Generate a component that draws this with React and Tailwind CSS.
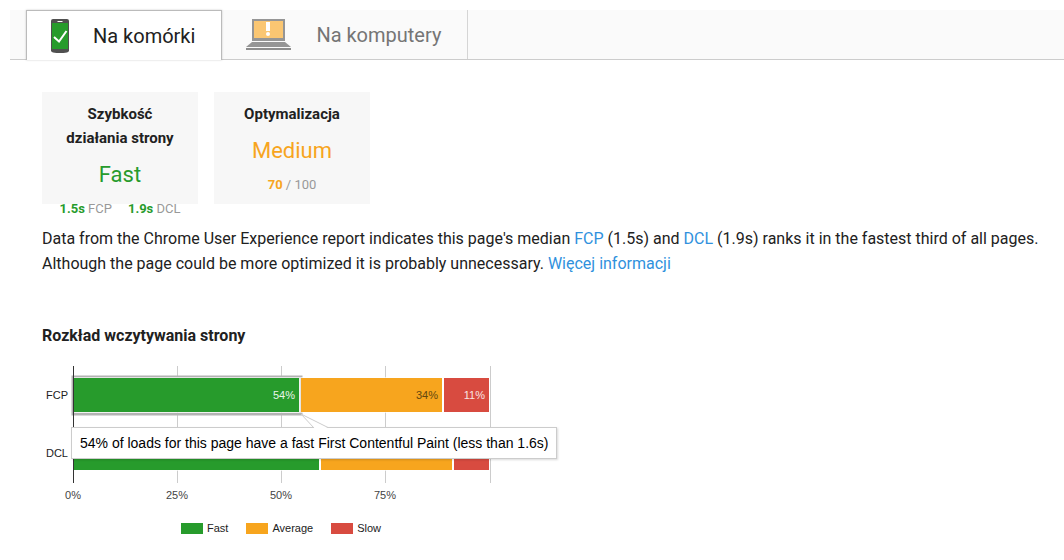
import { useState } from 'react'
import clsx from 'clsx'

const GREEN = '#279b2c'
const ORANGE = '#f7a51e'
const RED = '#d84b40'

const ticks = [
  { x: 31, label: '0%' },
  { x: 135, label: '25%' },
  { x: 239, label: '50%' },
  { x: 343, label: '75%' },
  { x: 448, label: '' },
]

const rows = [
  {
    name: 'FCP',
    y: 18,
    segments: [
      { x: 32, width: 225, fill: GREEN, label: '54%', color: '#e9f5ea' },
      { x: 259, width: 141, fill: ORANGE, label: '34%', color: '#63480f' },
      { x: 402, width: 45, fill: RED, label: '11%', color: '#f9e4e2' },
    ],
  },
  {
    name: 'DCL',
    y: 76,
    segments: [
      { x: 32, width: 245, fill: GREEN },
      { x: 279, width: 131, fill: ORANGE },
      { x: 412, width: 35, fill: RED },
    ],
  },
]

const legend = [
  { label: 'Fast', className: 'bg-[#279b2c]' },
  { label: 'Average', className: 'bg-[#f7a51e]' },
  { label: 'Slow', className: 'bg-[#d84b40]' },
]

function PhoneIcon() {
  return (
    <svg width="18" height="34" viewBox="0 0 18 34" aria-hidden="true">
      <path d="M2 0h14q2 0 2 2v29.500q0 1.500-2 2q-7 1-14 0q-2-.5-2-2V2q0-2 2-2z" fill="#505050" />
      <path d="M1 4h16v26H1z" fill="#279b2c" />
      <path d="M6.500 2.500h5" stroke="#fff" />
      <path d="M3 18l5 4.500L15.500 12" fill="none" stroke="#fff" strokeWidth="2" />
    </svg>
  )
}

function LaptopIcon() {
  return (
    <svg width="46" height="32" viewBox="0 0 46 32" aria-hidden="true">
      <path d="M6 0h33v22H6z" fill="#959595" />
      <path d="M8 2h29v17H8z" fill="#fac672" />
      <path d="M20 3h4v9h-4z" fill="#fff" />
      <circle cx="22" cy="15" r="2" fill="#fff" />
      <path d="M6 23h33l6 5H0z" fill="#959595" />
      <path d="M0 29h45v2H0z" fill="#8c8c8c" />
    </svg>
  )
}

function Tabs() {
  const [active, setActive] = useState('mobile')
  const tabs = [
    { id: 'mobile', label: 'Na komórki', icon: <PhoneIcon /> },
    { id: 'desktop', label: 'Na komputery', icon: <LaptopIcon /> },
  ]

  return (
    <div role="tablist" className="ml-2.5 mt-2.5 flex h-[50px] border-b border-[#ccc] bg-[#fafafa] pl-4">
      {tabs.map((tab) => (
        <button
          key={tab.id}
          type="button"
          role="tab"
          aria-selected={active === tab.id}
          onClick={() => setActive(tab.id)}
          className={clsx(
            'flex items-center gap-6 pl-6 pr-[26px] text-xl',
            active === tab.id
              ? '-mb-px border border-b-0 border-[#bbb] bg-white text-[#212121] shadow-[0_0_2px_rgba(0,0,0,0.2)]'
              : 'border-r border-[#d5d5d5] text-[#757575]'
          )}
        >
          {tab.icon}
          {tab.label}
        </button>
      ))}
    </div>
  )
}

function Card({ title, rating, ratingClass, children }) {
  return (
    <section className="h-28 w-[156px] bg-[#f7f7f7] px-4 pt-2.5 text-center">
      <h2 className="text-[15px] font-bold leading-6">{title}</h2>
      <div className={clsx('text-[22px] leading-[49px]', ratingClass)}>{rating}</div>
      <div className="flex justify-center gap-4 whitespace-nowrap text-[13px] leading-5 text-[#999]">{children}</div>
    </section>
  )
}

function LoadChart() {
  return (
    <div className="relative mt-3 w-[520px] font-['Liberation_Sans',Arial,sans-serif]">
      <svg width="460" height="146" viewBox="0 0 460 146" fontSize="11" className="block">
        {ticks.map((t, i) => (
          <g key={t.x}>
            <path d={`M${t.x + 0.5} 6V123`} stroke={i === 0 ? '#333' : '#ccc'} />
            {t.label && <text x={t.x} y="139" textAnchor="middle" fill="#444">{t.label}</text>}
          </g>
        ))}
        <rect x="31" y="17" width="228" height="37" fill="none" stroke="#b3b3b3" strokeWidth="3" />
        {rows.map((row) => (
          <g key={row.name}>
            <text x="26" y={row.y + 21} textAnchor="end" fill="#222">{row.name}</text>
            {row.segments.map((s) => (
              <g key={s.x}>
                <rect x={s.x} y={row.y} width={s.width} height="34" fill={s.fill} />
                <rect x={s.x - 0.5} y={row.y - 0.5} width={s.width + 1} height="35" fill="none" stroke="#fff" strokeOpacity="0.65" />
                {s.label && (
                  <text x={s.x + s.width - 4} y={row.y + 21} textAnchor="end" fill={s.color}>{s.label}</text>
                )}
              </g>
            ))}
          </g>
        ))}
        <path d="M31.500 6V123" stroke="#333" />
      </svg>

      <div role="tooltip" className="absolute left-[29px] top-[67px] border border-[#ccc] bg-white px-2 text-sm leading-[30px] whitespace-nowrap text-black shadow-[1px_1px_2px_rgba(0,0,0,0.15)]">
        54% of loads for this page have a fast First Contentful Paint (less than 1.6s)
        <svg width="30" height="15" viewBox="0 0 30 15" className="absolute -top-[15px] left-[228px]" aria-hidden="true">
          <path d="M1 1L14 15H28z" fill="#fff" />
          <path d="M14 15L1 1L28 14.500" fill="none" stroke="#ccc" />
        </svg>
      </div>

      <ul className="ml-[139px] mt-4 flex gap-[18px] text-[11px] leading-3 text-[#222]">
        {legend.map((item) => (
          <li key={item.label} className="flex items-center gap-1">
            <span className={clsx('h-[11px] w-[22px]', item.className)} />
            {item.label}
          </li>
        ))}
      </ul>
    </div>
  )
}

export default function App() {
  return (
    <div className="flow-root bg-white font-['Roboto',sans-serif] text-[#212121]">
      <Tabs />
      <main className="pb-6 pl-[42px] pr-4 pt-8">
        <div className="flex gap-4">
          <Card title="Szybkość działania strony" rating="Fast" ratingClass="text-[#279b2c]">
            <span><b className="text-[#279b2c]">1.5s</b> FCP</span>
            <span><b className="text-[#279b2c]">1.9s</b> DCL</span>
          </Card>
          <Card title="Optymalizacja" rating="Medium" ratingClass="text-[#f7a51e]">
            <span><b className="text-[#f7a51e]">70</b> / 100</span>
          </Card>
        </div>

        <p className="mt-[22px] text-base leading-[25px]">
          Data from the Chrome User Experience report indicates this page's median{' '}
          <a href="#fcp" className="text-[#3091dd]">FCP</a> (1.5s) and{' '}
          <a href="#dcl" className="text-[#3091dd]">DCL</a> (1.9s) ranks it in the fastest third of all pages.
          Although the page could be more optimized it is probably unnecessary.{' '}
          <a href="#more" className="text-[#3091dd]">Więcej informacji</a>
        </p>

        <h2 className="mt-12 text-base font-bold leading-6">Rozkład wczytywania strony</h2>
        <LoadChart />
      </main>
    </div>
  )
}
